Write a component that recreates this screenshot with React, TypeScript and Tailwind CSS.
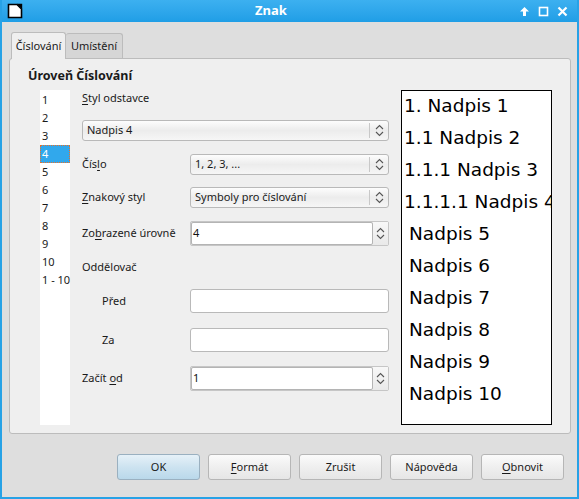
import type { ReactNode } from "react";

const ui = { fontFamily: '"Noto Sans", "DejaVu Sans", sans-serif' };
const preview = { fontFamily: '"DejaVu Sans", sans-serif' };

function Ul({ children }: { children: ReactNode }) {
  return <span className="underline underline-offset-2">{children}</span>;
}

function UpDown() {
  return (
    <svg width="9" height="13" viewBox="0 0 9 13" fill="none" stroke="#555" strokeWidth="1.1">
      <path d="M1 5 L4.5 1.5 L8 5" />
      <path d="M1 8 L4.5 11.5 L8 8" />
    </svg>
  );
}

function Combo({ value, className }: { value: string; className: string }) {
  return (
    <div
      className={`flex h-[21px] items-center rounded-[3px] border border-[#b9b9b9] bg-gradient-to-b from-[#fdfdfd] via-[#ececec] to-[#f6f6f6] pl-[4px] ${className}`}
    >
      <span className="flex-1 truncate">{value}</span>
      <span className="flex h-[15px] w-[19px] items-center justify-center border-l border-[#c8c8c8]">
        <UpDown />
      </span>
    </div>
  );
}

function Spin({ value }: { value: string }) {
  return (
    <div className="flex h-[25px] w-[199px] rounded-[2px] border border-[#c6c6c6] bg-[#e6e6e6]">
      <div className="flex flex-1 items-center rounded-[2px] border border-[#b4b4b4] bg-white pl-[1px] text-[#111]">
        {value}
      </div>
      <div className="flex w-[15px] items-center justify-center bg-gradient-to-b from-[#f8f8f8] to-[#e9e9e9]">
        <UpDown />
      </div>
    </div>
  );
}

function Field() {
  return <div className="h-[24px] w-[199px] rounded-[3px] border border-[#b9b9b9] bg-white" />;
}

function Button({ children, primary }: { children: ReactNode; primary?: boolean }) {
  return (
    <div
      className={`flex h-[26px] w-[83px] items-center justify-center rounded-[3px] border ${
        primary
          ? "border-[#9ab0c0] bg-gradient-to-b from-[#e6f1f8] via-[#cde3f0] to-[#b9d8ea]"
          : "border-[#b6b6b6] bg-gradient-to-b from-[#fbfbfb] via-[#efefef] to-[#e6e6e6]"
      }`}
    >
      {children}
    </div>
  );
}

const levels = ["1", "2", "3", "4", "5", "6", "7", "8", "9", "10", "1 - 10"];

const previewLines = [
  { text: "1. Nadpis 1", indent: false },
  { text: "1.1 Nadpis 2", indent: false },
  { text: "1.1.1 Nadpis 3", indent: false },
  { text: "1.1.1.1 Nadpis 4", indent: false },
  { text: "Nadpis 5", indent: true },
  { text: "Nadpis 6", indent: true },
  { text: "Nadpis 7", indent: true },
  { text: "Nadpis 8", indent: true },
  { text: "Nadpis 9", indent: true },
  { text: "Nadpis 10", indent: true },
];

export default function App() {
  return (
    <div
      className="flex h-[499px] w-[579px] flex-col overflow-hidden border-x-2 border-b-2 border-[#27a2e6] bg-[#dedede] text-[11px] text-[#1a1a1a]"
      style={ui}
    >
      {/* title bar */}
      <div className="relative flex h-[22px] shrink-0 items-center bg-gradient-to-b from-[#3cb0f0] to-[#1f9ee6] px-[5px]">
        <svg width="16" height="16" viewBox="0 0 16 16">
          <path d="M1.5 1.5 H10 L14.5 6 V14.5 H1.5 Z" fill="#fff" stroke="#000" strokeWidth="1.6" />
          <path d="M10 0.8 L15.2 6 V0.8 Z" fill="#000" />
        </svg>
        <span className="flex-1 text-center text-[13px] font-bold text-white">Znak</span>
        <div className="flex items-center gap-[8px] pr-[4px]">
          <svg width="11" height="11" viewBox="0 0 11 11" fill="#fff">
            <path d="M5.5 1 L10 5.5 H7 V10 H4 V5.5 H1 Z" />
          </svg>
          <svg width="11" height="11" viewBox="0 0 11 11" fill="none" stroke="#fff" strokeWidth="1.6">
            <rect x="1.5" y="1.5" width="8" height="8" />
          </svg>
          <svg width="11" height="11" viewBox="0 0 11 11" fill="none" stroke="#fff" strokeWidth="2.2">
            <path d="M1.5 1.5 L9.5 9.5 M9.5 1.5 L1.5 9.5" />
          </svg>
        </div>
      </div>

      <div className="flex flex-1 flex-col px-[7px] pt-[9px]">
        {/* tabs */}
        <div className="flex h-[27px] items-end pl-[2px]">
          <div className="relative z-10 -mb-px flex h-[27px] w-[55px] items-center justify-center rounded-t-[3px] border border-b-0 border-[#bcbcbc] bg-[#efefef]">
            Číslování
          </div>
          <div className="flex h-[25px] w-[57px] items-center justify-center rounded-t-[3px] border border-b-0 border-l-0 border-[#bcbcbc] bg-[#d6d6d6]">
            Umístění
          </div>
        </div>

        {/* tab panel */}
        <div className="flex h-[376px] w-[562px] flex-col rounded-[3px] border border-[#bcbcbc] bg-[#efefef] pl-[18px] pt-[8px]">
          <div className="h-[17px] text-[12.5px] font-bold leading-[17px]">Úroveň Číslování</div>
          <div className="mt-[6px] flex">
            {/* level list */}
            <div className="ml-[12px] flex h-[335px] w-[30px] flex-col bg-white pt-[1px]">
              {levels.map((l) =>
                l === "4" ? (
                  <div
                    key={l}
                    className="flex h-[18px] items-center border border-dotted border-[#e8702a] bg-[#31a8ec] pl-[1px] text-white"
                  >
                    {l}
                  </div>
                ) : (
                  <div key={l} className="flex h-[18px] items-center whitespace-nowrap pl-[2px]">
                    {l}
                  </div>
                )
              )}
            </div>

            {/* form */}
            <div className="ml-[12px] flex w-[307px] flex-col">
              <div className="flex h-[16px] items-center">
                <Ul>S</Ul>tyl odstavce
              </div>
              <Combo value="Nadpis 4" className="mt-[14px] w-[307px]" />
              <div className="mt-[13px] flex items-center">
                <div className="w-[108px]">
                  Čís<Ul>l</Ul>o
                </div>
                <Combo value="1, 2, 3, ..." className="w-[199px]" />
              </div>
              <div className="mt-[12px] flex items-center">
                <div className="w-[108px]">
                  <Ul>Z</Ul>nakový styl
                </div>
                <Combo value="Symboly pro číslování" className="w-[199px]" />
              </div>
              <div className="mt-[13px] flex items-center">
                <div className="w-[108px]">
                  Zo<Ul>b</Ul>razené úrovně
                </div>
                <Spin value="4" />
              </div>
              <div className="mt-[13px] flex h-[16px] items-center">Oddělovač</div>
              <div className="mt-[14px] flex items-center">
                <div className="w-[108px] pl-[20px]">Před</div>
                <Field />
              </div>
              <div className="mt-[15px] flex items-center">
                <div className="w-[108px] pl-[20px]">Za</div>
                <Field />
              </div>
              <div className="mt-[14px] flex items-center">
                <div className="w-[108px]">
                  Začít <Ul>o</Ul>d
                </div>
                <Spin value="1" />
              </div>
            </div>

            {/* preview */}
            <div
              className="ml-[12px] flex h-[335px] w-[151px] flex-col overflow-hidden border border-black bg-white pl-[2px] pt-[2px] text-[18.5px] text-black"
              style={preview}
            >
              {previewLines.map((p) => (
                <div
                  key={p.text}
                  className={`h-[32px] shrink-0 whitespace-nowrap leading-[26px] ${p.indent ? "pl-[5px]" : ""}`}
                >
                  {p.text}
                </div>
              ))}
            </div>
          </div>
        </div>

        {/* buttons */}
        <div className="mt-[20px] flex justify-end gap-[8px] pr-[6px]">
          <Button primary>OK</Button>
          <Button>
            <Ul>F</Ul>ormát
          </Button>
          <Button>Zrušit</Button>
          <Button>Nápověda</Button>
          <Button>
            <Ul>O</Ul>bnovit
          </Button>
        </div>
      </div>
    </div>
  );
}
